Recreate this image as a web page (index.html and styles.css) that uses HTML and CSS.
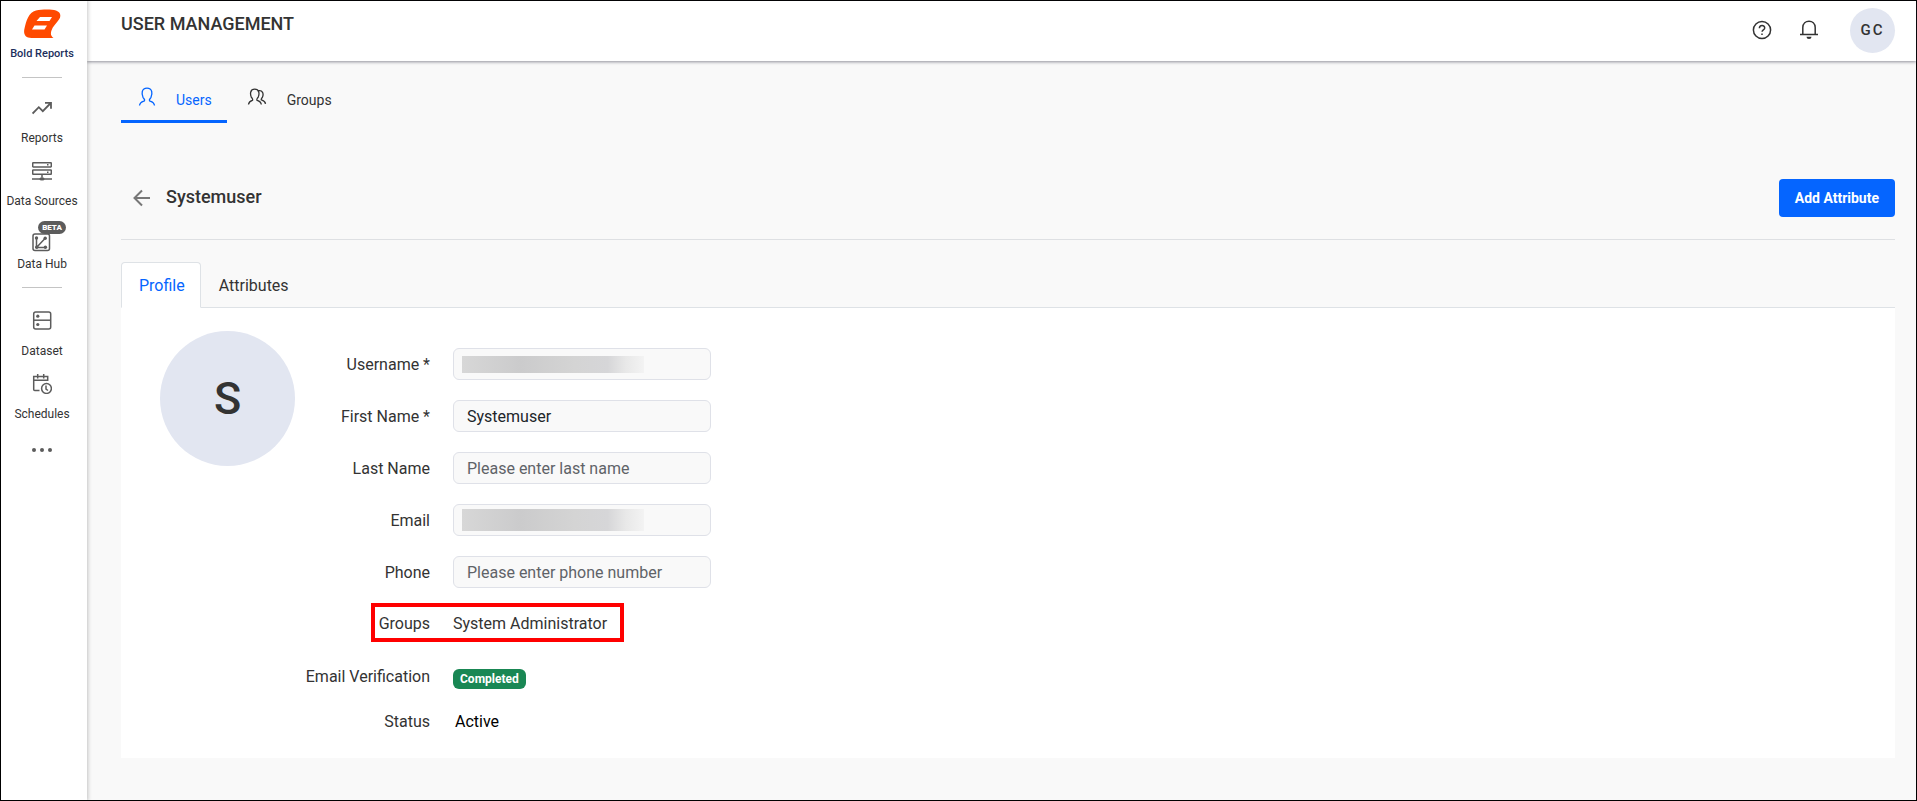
FILE: index.html
```html
<!DOCTYPE html>
<html lang="en">
<head>
<meta charset="utf-8">
<meta name="viewport" content="width=device-width, initial-scale=1">
<title>User Management</title>
<link rel="stylesheet" href="styles.css">
</head>
<body>
<div class="app">
  <nav class="sidebar" aria-label="Main">
    <a class="brand" href="#">
      <svg width="38" height="30" viewBox="0 0 38 30" aria-hidden="true"><path d="M13 1.500C19 .3 28 0 33 1.500C37.500 3 38.500 7 36 10.500C33.500 14 29.500 17.500 28.300 22C27.500 25 27.800 27 30.500 29H8.500C2 29 .2 25 1.500 19.500C3.200 12 5.500 3.500 13 1.500Z" fill="#ff4a00"/><path d="M17 8H29L26.500 12H13.500ZM11.500 16.500H24L21.500 20.500H9Z" fill="#fff"/></svg>
      <span>Bold Reports</span>
    </a>
    <hr class="rule">
    <a class="item" href="#">
      <svg width="20" height="20" viewBox="0 0 20 20" aria-hidden="true"><path d="M.6 15.500 6.800 9.200l4 4L18.300 5.500M13 4.800h6v6" stroke-width="1.800"/></svg>
      <span>Reports</span>
    </a>
    <a class="item" href="#">
      <svg width="20" height="20" viewBox="0 0 20 20" aria-hidden="true"><rect x=".7" y="1.700" width="18.600" height="4.200" rx=".5"/><rect x=".7" y="9" width="18.600" height="4.300" rx=".5"/><path d="M15 3.800h1.500M15 11.200h1.500M10 13.500v3M0 18h20"/><ellipse cx="10" cy="17.900" rx="2.600" ry="1.600" class="solid"/></svg>
      <span>Data Sources</span>
    </a>
    <a class="item hub" href="#">
      <svg width="20" height="20" viewBox="0 0 20 20" aria-hidden="true"><rect x="1" y="2" width="16.500" height="16.500" rx="2"/><path d="M4.500 5.500v10H13.500M4.500 15.500 13 6.500"/><g class="solid"><circle cx="4.500" cy="6" r="1.700"/><circle cx="13.200" cy="6.300" r="1.700"/><circle cx="4.700" cy="15.300" r="1.700"/><circle cx="13.400" cy="15.300" r="1.700"/></g></svg>
      <em class="beta">BETA</em>
      <span>Data Hub</span>
    </a>
    <hr class="rule rule-mid">
    <a class="item" href="#">
      <svg width="20" height="20" viewBox="0 0 20 20" aria-hidden="true"><rect x="1.700" y="1" width="17" height="17" rx="2"/><path d="M1.700 9.200h17"/><g class="solid"><circle cx="5.800" cy="5.200" r="1.600"/><circle cx="5.800" cy="13.500" r="1.600"/></g></svg>
      <span>Dataset</span>
    </a>
    <a class="item" href="#">
      <svg width="20" height="20" viewBox="0 0 20 20" aria-hidden="true"><path d="M7.500 16.500H2.700a1 1 0 0 1-1-1V2.500h14v4.500M1.700 6.200h14M5.700 0v4.500M11.700 0v4.500"/><circle cx="14.500" cy="14.500" r="4.900"/><path d="M14 11.500v3.500l2 1.500"/></svg>
      <span>Schedules</span>
    </a>
    <button class="more" aria-label="More"><i></i><i></i><i></i></button>
  </nav>

  <div class="page">
    <header class="topbar">
      <h1>USER MANAGEMENT</h1>
      <div class="actions">
        <button class="icon-btn" aria-label="Help"><svg width="20" height="20" viewBox="0 0 20 20" aria-hidden="true"><circle cx="10" cy="10" r="8.600"/><path d="M7.400 8.200c0-3.600 5.300-3.500 5.300-.3 0 2-2.600 2-2.600 3.800"/><path d="M10 13.500v1.500"/></svg></button>
        <button class="icon-btn" aria-label="Notifications"><svg width="20" height="20" viewBox="0 0 20 20" aria-hidden="true"><path d="M1 14.500h18M3.800 14.500V7.500C3.800-1 16.200-1 16.200 7.500v7"/><path d="M7.500 16.800h5a2.500 2.200 0 0 1-5 0Z" class="solid"/></svg></button>
        <button class="avatar">GC</button>
      </div>
    </header>

    <main class="content">
      <nav class="tabs" aria-label="Sections">
        <a class="tab active" href="#"><svg width="18" height="20" viewBox="0 0 18 20" aria-hidden="true"><path d="M1.500 18.500c.3-3.500 3-4 5-4.700.8-1-.6-2-1.500-3.500C3.500 7 3.300 1.200 9 1.200s5.500 5.800 4 9.100c-.9 1.500-2.300 2.500-1.500 3.500 2 .7 4.700 1.200 5 4.700"/></svg><span>Users</span></a>
        <a class="tab" href="#"><svg width="20" height="20" viewBox="0 0 20 20" aria-hidden="true"><path d="M1.500 17.500c.3-3 2.300-3.600 4-4.200.7-1-.5-2-1.200-3.200C3 7 3 2.200 7.700 2.200s4.900 4.800 3.500 7.900c-.7 1.200-1.900 2.200-1.200 3.200 1.800.6 4 1.200 4.300 4.200M11.500 3.700c4-.8 5.500 3 3.900 6.400-.6 1.200-1.700 2-1 2.900 1.600.6 3.800 1 4.100 3.900"/></svg><span>Groups</span></a>
      </nav>

      <div class="title-row">
        <a class="back" href="#" aria-label="Back"><svg width="18" height="18" viewBox="0 0 18 18" aria-hidden="true"><path d="M17 9H1.500M9 1.500 1.500 9 9 16.500"/></svg></a>
        <h2>Systemuser</h2>
        <button class="primary">Add Attribute</button>
      </div>

      <div class="subtabs" role="tablist">
        <button class="subtab selected" role="tab" aria-selected="true">Profile</button>
        <button class="subtab" role="tab" aria-selected="false">Attributes</button>
      </div>

      <section class="panel">
        <div class="portrait">S</div>
        <form class="form">
          <div class="field"><label for="username">Username *</label><input id="username" class="masked masked-name" type="text"></div>
          <div class="field"><label for="first">First Name *</label><input id="first" type="text" value="Systemuser"></div>
          <div class="field"><label for="last">Last Name</label><input id="last" type="text" placeholder="Please enter last name"></div>
          <div class="field"><label for="email">Email</label><input id="email" class="masked masked-email" type="email"></div>
          <div class="field"><label for="phone">Phone</label><input id="phone" type="tel" placeholder="Please enter phone number"></div>
          <div class="field marked"><span class="label">Groups</span><span>System Administrator</span></div>
          <div class="field verification"><span class="label">Email Verification</span><span class="badge">Completed</span></div>
          <div class="field status"><span class="label">Status</span><span class="state">Active</span></div>
        </form>
      </section>
    </main>
  </div>
</div>
</body>
</html>
```

FILE: styles.css
```css
*, *::before, *::after { box-sizing: border-box; }

body {
  margin: 0;
  font-family: Roboto, "Liberation Sans", sans-serif;
  font-size: 16px;
  line-height: 20px;
  color: #333;
}

a { color: inherit; text-decoration: none; }
button { font: inherit; color: inherit; border: 0; padding: 0; background: none; cursor: pointer; }
svg { display: block; fill: none; stroke: currentColor; stroke-width: 1.5; }
.solid { fill: currentColor; stroke: none; }

.app {
  display: flex;
  min-height: 100vh;
  border: 1px solid #000;
  background: #f9f9f9;
}

/* Sidebar */
.sidebar {
  position: relative;
  z-index: 2;
  flex: none;
  width: 86px;
  padding: 8px 4px 0 0;
  display: flex;
  flex-direction: column;
  align-items: center;
  background: #fff;
  box-shadow: 0 0 4px 1px rgba(0, 0, 0, .22);
}
.brand {
  display: flex;
  flex-direction: column;
  align-items: center;
  gap: 7px;
  font-size: 11px;
  line-height: 16px;
  font-weight: 500;
  color: #1d2f5c;
}
.brand svg { stroke: none; }
.rule { width: 40px; height: 1px; margin: 15px 0 20px; border: 0; background: #c4c4c4; }
.rule-mid { margin: 0 0 23px; }
.item {
  position: relative;
  display: flex;
  flex-direction: column;
  align-items: center;
  gap: 12px;
  height: 63px;
  font-size: 12px;
  line-height: 16px;
}
.item svg { color: #5c5c5c; }
.hub { padding-top: 8px; gap: 4px; }
.beta {
  position: absolute;
  top: -3px;
  left: 21px;
  padding: 0 4px;
  border-radius: 7px;
  background: #5c5c5c;
  color: #fff;
  font-size: 8px;
  font-style: normal;
  font-weight: 900;
  line-height: 13px;
}
.more { display: flex; gap: 4px; padding: 11px 4px; }
.more i { width: 4px; height: 4px; border-radius: 50%; background: #5c5c5c; }

/* Top bar */
.page { flex: 1; min-width: 0; }
.topbar {
  display: flex;
  justify-content: space-between;
  height: 60px;
  padding: 0 21px 0 34px;
  background: #fff;
  box-shadow: 0 1px 3px rgba(40, 40, 60, .5);
}
h1 { margin: 12px 0 0; font-size: 18px; line-height: 22px; font-weight: 500; }
.actions { display: flex; align-items: center; gap: 27px; height: 58px; }
.avatar {
  width: 45px;
  height: 45px;
  margin-left: 4px;
  border-radius: 50%;
  background: #e2e6f1;
  font-size: 15px;
  font-weight: 500;
  letter-spacing: 2px;
}

/* Section tabs */
.content { padding: 23px 21px 24px 34px; }
.tabs { display: flex; gap: 3px; }
.tab {
  display: flex;
  gap: 20px;
  height: 39px;
  padding: 3px 15px 0 17px;
  border-bottom: 3px solid transparent;
  font-size: 14px;
}
.tab svg { stroke-width: 1.300; }
.tab span { padding-top: 3px; }
.tab.active { color: #0565ff; border-color: #0565ff; }

.title-row {
  display: flex;
  align-items: center;
  margin-top: 56px;
  padding-bottom: 22px;
  border-bottom: 1px solid #dee0e3;
}
.back { padding-left: 12px; color: #777; }
.back svg { stroke-width: 2; }
h2 { margin: 0 0 2px 15px; font-size: 18px; line-height: 22px; font-weight: 500; }
.primary {
  margin-left: auto;
  padding: 1px 16px 0;
  border-radius: 4px;
  background: #0565ff;
  color: #fff;
  font-size: 14px;
  font-weight: 700;
  line-height: 37px;
}

/* Profile tabs */
.subtabs { display: flex; margin-top: 22px; border-bottom: 1px solid #dee2e6; }
.subtab {
  height: 46px;
  margin-bottom: -1px;
  padding: 2px 15px 0 17px;
  border: 1px solid transparent;
  border-radius: 4px 4px 0 0;
}
.subtab.selected { border-color: #dee2e6 #dee2e6 #fff; background: #fff; color: #0565ff; }

.panel { display: flex; min-height: 450px; padding: 23px 39px 18px; background: #fff; }
.portrait {
  flex: none;
  width: 135px;
  height: 135px;
  border-radius: 50%;
  background: #e2e6f1;
  font-size: 45px;
  font-weight: 500;
  line-height: 135px;
  text-align: center;
}
.form { padding-top: 17px; }
.field {
  position: relative;
  display: grid;
  grid-template-columns: 135px 258px;
  column-gap: 23px;
  align-items: center;
  height: 32px;
  margin-bottom: 20px;
}
.field label, .label { text-align: right; }
.field label { padding-top: 2px; }
.field input {
  width: 100%;
  height: 32px;
  padding: 0 13px;
  border: 1px solid #dfe1e8;
  border-radius: 6px;
  background-color: #f9f9f9;
  color: #212529;
  font: inherit;
}
.field input::placeholder { color: #5f6368; opacity: 1; }
.field .masked {
  background-repeat: no-repeat;
  background-position: 8px center;
  background-image: linear-gradient(90deg, #d7d7d7, #cbcbcc 32%, #d4d4d4 62%, #d6d6d8 80%, #e8e8e8 90%, #f3f3f3);
}
.field .masked-name { background-size: 182px 17px; }
.field .masked-email { background-size: 182px 22px; }
.marked::after {
  content: "";
  position: absolute;
  top: -5px;
  left: 76px;
  width: 253px;
  height: 39px;
  border: 4px solid #f00;
}
.verification { margin-top: 21px; margin-bottom: 13px; }
.status { margin-bottom: 0; }
.badge {
  justify-self: start;
  margin-top: 4px;
  padding: 0 7px;
  border-radius: 6px;
  background: #198754;
  color: #fff;
  font-size: 12px;
  font-weight: 700;
}
.state { padding-left: 2px; color: #000; }
```
